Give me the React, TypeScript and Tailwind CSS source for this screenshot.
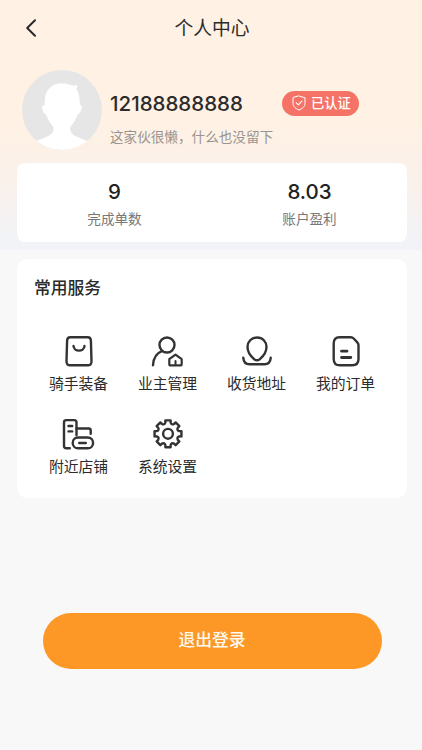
import type { ReactNode } from "react";

type IconProps = {
  children: ReactNode;
};

const Icon = ({ children }: IconProps) => {
  return (
    <svg
      viewBox="0 0 34 32"
      className="h-8 w-[34px]"
      fill="none"
      stroke="#333333"
      strokeWidth="2.4"
      strokeLinecap="round"
      strokeLinejoin="round"
    >
      {children}
    </svg>
  );
};

const BagIcon = () => (
  <Icon>
    <path d="M8.3 2.3h17.4q3 0 3.200 3.200l.6 20.900q.1 3.900-3.800 3.900H8.300q-3.900 0-3.800-3.900l.6-20.900q.2-3.200 3.200-3.200z" />
    <path d="M11.5 11c.6 6.2 10.4 6.2 11 0" />
  </Icon>
);

const OwnerIcon = () => (
  <Icon>
    <circle cx="16" cy="10" r="7.500" />
    <path d="M11 16.200C5.600 18.200 2.400 23.400 2 30.300" />
    <path d="M24.500 19.700l6.200 4.500v4.700q0 1.500-1.500 1.500h-9.400q-1.500 0-1.500-1.500v-4.700z" strokeWidth="2.200" />
    <path d="M24.500 26v3.500" strokeWidth="2" />
  </Icon>
);

const AddressIcon = () => (
  <Icon>
    <path d="M17 2.500c-5.600 0-9.500 4.200-9.500 9.500 0 5 3 9 6.600 12.100q2.900 2.400 5.800 0c3.600-3.100 6.600-7.100 6.600-12.100 0-5.300-3.900-9.500-9.500-9.500z" />
    <path d="M3.300 22.800c.3 4.200 2.200 6.400 6.300 6.400h14.800c4.100 0 6-2.200 6.300-6.400" />
  </Icon>
);

const OrderIcon = () => (
  <Icon>
    <path d="M10.500 2.300h11.200q1.800 0 3 1.200l3.600 3.800q1.200 1.300 1.200 3v13.700q0 6.300-6.300 6.300H11q-6.300 0-6.300-6.300V8.600q0-6.300 5.800-6.300z" />
    <path d="M12.500 16.200h5.500M12.500 22.500h9.300" strokeWidth="2.800" />
  </Icon>
);

const ShopIcon = () => (
  <Icon>
    <path d="M7.800 30.300H4.300q-2.300 0-2.300-2.300V4.400Q2 2.100 4.300 2.100h7.900q2.300 0 2.300 2.300v12.800" />
    <path d="M14.500 10.500h12.200q2 0 2 2v3.300" />
    <path d="M6.500 8h3.700M6.500 13.400h3.700" />
    <path d="M18.800 19.500h-2.600c-3.400 0-5.500 2.600-5.500 5.400s2.100 5.400 5.500 5.400h9.400c3.400 0 5.500-2.600 5.500-5.400s-2.100-5.400-5.500-5.400z" />
    <path d="M17.200 25h6.600" />
  </Icon>
);

const teeth = Array.from({ length: 8 }, (_, i) => i * 45);

const gearPath =
  teeth
    .map((deg, i) => {
      const at = (offset: number, r: number) => {
        const a = ((deg + offset - 90) * Math.PI) / 180;
        return `${(17 + r * Math.cos(a)).toFixed(2)} ${(15.8 + r * Math.sin(a)).toFixed(2)}`;
      };
      return `${i ? "L" : "M"}${at(-11, 13.7)}L${at(11, 13.7)}L${at(13.5, 11.5)}Q${at(22.5, 9.3)} ${at(31.5, 11.5)}`;
    })
    .join("") + "Z";

const SettingsIcon = () => (
  <Icon>
    <path d={gearPath} />
    <circle cx="17" cy="15.8" r="4.900" />
  </Icon>
);

const Avatar = () => (
  <svg viewBox="0 0 80 80" className="size-20 shrink-0">
    <defs>
      <clipPath id="avatar">
        <circle cx="40" cy="40" r="40" />
      </clipPath>
    </defs>
    <g clipPath="url(#avatar)">
      <rect width="80" height="80" fill="#e6e6e6" />
      <path
        d="M22.800 35C21.600 21 29 13.200 40 13.200c5 0 8 1.800 10.500 2.200 1.800.3 3.300.1 5-.3-.1 1.700-.5 2.800-1.400 3.700C57.100 22.500 58 28 57.700 35c2.500.300 2.600 2.200 1.600 4.700-.8 2.200-1.700 4.200-3.400 4.600-2 5.400-5 9.700-7.700 12.700-.5 5 1.200 7 5.500 9.200 5 2.300 9 3.300 14 6.300V82H12V72.500c5-3 9-4 14-6.300 4.300-2.200 6-4.200 5.500-9.200-2.700-3-5.600-7.300-7.600-12.700-1.700-.4-2.600-2.400-3.400-4.600-.9-2.500-.3-4.400 2.300-4.700z"
        fill="#ffffff"
      />
    </g>
  </svg>
);

const services = [
  { label: "骑手装备", icon: <BagIcon /> },
  { label: "业主管理", icon: <OwnerIcon /> },
  { label: "收货地址", icon: <AddressIcon /> },
  { label: "我的订单", icon: <OrderIcon /> },
  { label: "附近店铺", icon: <ShopIcon /> },
  { label: "系统设置", icon: <SettingsIcon /> },
];

const stats = [
  { value: "9", label: "完成单数" },
  { value: "8.03", label: "账户盈利" },
];

export default function App() {
  return (
    <div className="h-[750px] w-[422px] overflow-hidden bg-[#f8f8f8] font-['Inter','Noto_Sans_CJK_SC',sans-serif] text-[#2b2b2b]">
      <div className="h-[250px] bg-linear-to-b from-[#fff1e4] from-50% via-[#f9f1ec] via-75% to-[#f2f3f6] to-95% px-[17px]">
        <header className="grid h-14 grid-cols-[40px_1fr_40px] items-center">
          <svg viewBox="0 0 12 18" className="ml-2 h-[18px] w-3" fill="none" stroke="#2b2b2b" strokeWidth="2">
            <path d="M10 1.200L2.200 9l7.800 7.800" strokeLinecap="round" strokeLinejoin="round" />
          </svg>
          <h1 className="pt-0.5 pl-0.5 text-center text-[18.800px]">个人中心</h1>
        </header>

        <div className="flex pt-3.5 pl-[5px]">
          <Avatar />
          <div className="ml-2 w-[171px] shrink-0 pt-5">
            <div className="text-[20.500px] leading-7 font-medium">12188888888</div>
            <div className="mt-[9px] text-[13.600px] leading-5 whitespace-nowrap text-[#999490]">这家伙很懒，什么也没留下</div>
          </div>
          <div className="mt-[21px] ml-px flex h-[25px] w-[77px] items-center gap-[5px] rounded-full bg-[#f57366] pl-2.5 text-[13.300px] font-medium whitespace-nowrap text-white">
            <svg viewBox="0 0 14 16" className="-mt-0.5 h-4 w-3.5 shrink-0" fill="none" stroke="white" strokeLinecap="round" strokeLinejoin="round">
              <path d="M7 1l6 1.800v5.400c0 3.200-2.600 5.500-6 6.800-3.400-1.300-6-3.600-6-6.800V2.800z" />
              <path d="M4.300 7.900l2 2 3.600-3.700" strokeWidth="1.200" />
            </svg>
            已认证
          </div>
        </div>

        <div className="mt-[12.500px] grid h-[79px] w-[390px] grid-cols-2 rounded-lg bg-white text-center">
          {stats.map((s) => (
            <div key={s.label} className="pt-[15px]">
              <div className="text-[20.500px] leading-7 font-medium text-[#222]">{s.value}</div>
              <div className="mt-[3px] text-[13.600px] leading-5 text-[#777]">{s.label}</div>
            </div>
          ))}
        </div>
      </div>

      <section className="mx-[17px] mt-[9px] h-[239px] w-[390px] rounded-[10px] bg-white px-[17px] pt-[17px]">
        <h2 className="text-[16.800px] leading-6 font-medium">常用服务</h2>
        <div className="mt-[35px] grid w-[356px] grid-cols-4 gap-y-[26px]">
          {services.map((s) => (
            <div key={s.label} className="flex flex-col items-center">
              {s.icon}
              <span className="mt-[9px] text-[14.800px] leading-4">{s.label}</span>
            </div>
          ))}
        </div>
      </section>

      <button className="mx-[43px] mt-[115px] block h-14 w-[339px] rounded-full bg-[#fd9827] pr-px text-[16.800px] font-medium text-[#fffaf2]">
        退出登录
      </button>
    </div>
  );
}
